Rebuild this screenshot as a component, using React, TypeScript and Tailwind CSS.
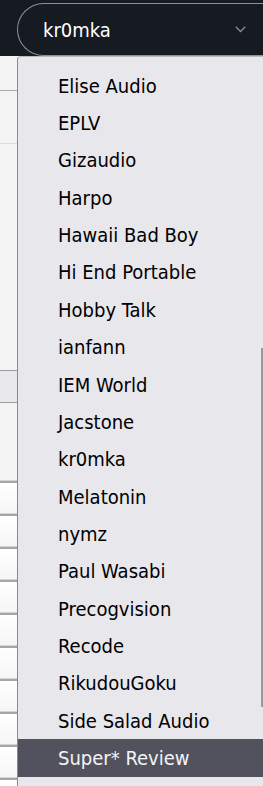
const brands = [
  "Elise Audio",
  "EPLV",
  "Gizaudio",
  "Harpo",
  "Hawaii Bad Boy",
  "Hi End Portable",
  "Hobby Talk",
  "ianfann",
  "IEM World",
  "Jacstone",
  "kr0mka",
  "Melatonin",
  "nymz",
  "Paul Wasabi",
  "Precogvision",
  "Recode",
  "RikudouGoku",
  "Side Salad Audio",
  "Super* Review",
];

const rows = Array.from({ length: 10 });

export default function App() {
  const active = "Super* Review";

  return (
    <div className="relative w-[263px] h-[786px] overflow-hidden bg-[#f4f4f4] font-['DejaVu_Sans_Condensed','DejaVu_Sans',sans-serif]">
      {/* top bar with the reviewer select */}
      <div className="h-[56px] bg-[#161a21] pl-[17px] pt-[3px]">
        <div className="h-[53px] rounded-l-full rounded-r-[30px] border border-[#8e9095] border-r-0 flex items-center justify-between pl-[25px] pr-[17px]">
          <span className="text-[20px] text-white leading-none">kr0mka</span>
          <svg width="11" height="7" viewBox="0 0 11 7" fill="none">
            <path d="M0.8 0.8 L5.5 5.5 L10.2 0.8" stroke="#8b8f96" strokeWidth="1.3" />
          </svg>
        </div>
      </div>

      {/* page content behind the open list */}
      <div className="flex flex-col">
        <div className="h-[35px] border-b border-[#a9a9a9]" />
        <div className="h-[53px] border-b border-[#dcdcdc]" />
        <div className="h-[227px] border-b border-[#9c9c9c]" />
        <div className="h-[32px] bg-[#e8e7ec] border-b border-[#9c9c9c]" />
        <div className="h-[77px]" />
        {rows.map((_, i) => (
          <div key={i} className="h-[33px] flex flex-col">
            <div className="h-[1px] bg-[#d4d4d4]" />
            <div className="h-[2px] bg-[#a6a6a6]" />
            <div className="flex-1 bg-gradient-to-b from-white to-[#f6f6f6]" />
          </div>
        ))}
      </div>

      {/* open dropdown list */}
      <div className="absolute left-[17px] top-[56px] right-0 bottom-0 bg-[#e8e7ec] border-l border-t border-[#8a8a8a] border-t-[#b9b9bd] rounded-tl-[4px] pt-[10px]">
        {brands.map((b) => (
          <div
            key={b}
            className={
              b === active
                ? "h-[37.36px] flex items-center pl-[40px] text-[20px] leading-none text-[#f4f4f6] bg-[#52525e]"
                : "h-[37.36px] flex items-center pl-[40px] text-[20px] leading-none text-black"
            }
          >
            {b}
          </div>
        ))}
        <div className="absolute right-0 top-[291px] w-[2px] h-[359px] bg-[#9a9a9a]" />
      </div>
    </div>
  );
}
